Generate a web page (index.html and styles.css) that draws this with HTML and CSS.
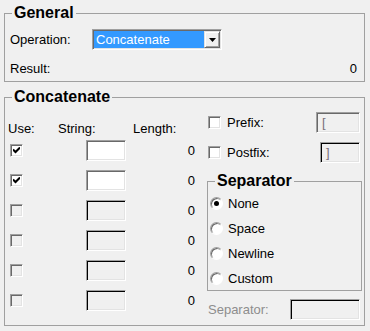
FILE: index.html
```html
<!DOCTYPE html>
<html lang="en">
<head>
  <meta charset="UTF-8">
  <title>Concatenate</title>
  <link rel="stylesheet" href="styles.css">
</head>
<body>
  <fieldset class="group">
    <legend>General</legend>
    <div class="general-grid">
      <span>Operation:</span>
      <div class="combo">
        <span class="combo-value">Concatenate</span>
        <span class="combo-btn"><svg width="7" height="4" viewBox="0 0 7 4"><path d="M0 0h7L3.5 4z" fill="#000"/></svg></span>
      </div>
      <span>Result:</span>
      <span class="num">0</span>
    </div>
  </fieldset>

  <fieldset class="group concat">
    <legend>Concatenate</legend>
    <div class="concat-body">
      <div class="strings">
        <div class="strings-head">
          <span class="col-use">Use:</span>
          <span class="col-string">String:</span>
          <span>Length:</span>
        </div>
        <div class="strings-grid">
          <span class="check on"><svg width="7" height="7" viewBox="0 0 7 7"><path d="M0 2.5l2.5 2.5L7 0.5" fill="none" stroke="#000" stroke-width="2"/></svg></span>
          <span class="edit"></span>
          <span class="num">0</span>

          <span class="check on"><svg width="7" height="7" viewBox="0 0 7 7"><path d="M0 2.5l2.5 2.5L7 0.5" fill="none" stroke="#000" stroke-width="2"/></svg></span>
          <span class="edit"></span>
          <span class="num">0</span>

          <span class="check off"></span>
          <span class="edit off"></span>
          <span class="num">0</span>

          <span class="check off"></span>
          <span class="edit off"></span>
          <span class="num">0</span>

          <span class="check off"></span>
          <span class="edit off"></span>
          <span class="num">0</span>

          <span class="check off"></span>
          <span class="edit off"></span>
          <span class="num">0</span>
        </div>
      </div>

      <div class="options">
        <div class="opt-row">
          <span class="check"></span>
          <span class="opt-label">Prefix:</span>
          <span class="edit soft prefix">[</span>
        </div>
        <div class="opt-row postfix-row">
          <span class="check"></span>
          <span class="opt-label">Postfix:</span>
          <span class="edit off postfix">]</span>
        </div>

        <fieldset class="group separator">
          <legend>Separator</legend>
          <div class="radios">
            <div class="radio-row"><span class="radio sel"></span>None</div>
            <div class="radio-row"><span class="radio"></span>Space</div>
            <div class="radio-row"><span class="radio"></span>Newline</div>
            <div class="radio-row"><span class="radio"></span>Custom</div>
          </div>
        </fieldset>

        <div class="opt-row sep-row">
          <span class="muted">Separator:</span>
          <span class="edit off sep-edit"></span>
        </div>
      </div>
    </div>
  </fieldset>
</body>
</html>
```

FILE: styles.css
```css
body {
  margin: 0;
  background: #f0f0f0;
  font-family: "Liberation Sans", Arial, sans-serif;
  font-size: 13px;
  line-height: 15px;
  color: #000;
}

.group {
  margin: 4px 5px 0 4px;
  padding: 0;
  border: 1px solid #a0a0a0;
  min-width: 0;
}

.group legend {
  margin-left: 7px;
  padding: 0 2px;
  font-size: 16px;
  line-height: 18px;
  font-weight: bold;
}

.general-grid {
  display: grid;
  grid-template-columns: 82px 1fr;
  grid-auto-rows: 21px;
  row-gap: 8px;
  align-items: center;
  padding: 7px 7px 2px 5px;
}

.num {
  justify-self: end;
  text-align: right;
}

.combo {
  display: flex;
  width: 130px;
  height: 21px;
  box-sizing: border-box;
  padding: 1px;
  border: 1px solid;
  border-color: #a0a0a0 #fff #fff #a0a0a0;
  box-shadow: inset 1px 1px 0 #696969, inset -1px -1px 0 #e3e3e3;
}

.combo-value {
  flex: 1;
  background: #3399ff;
  color: #fff;
  padding-left: 2px;
  line-height: 17px;
}

.combo-btn {
  width: 16px;
  box-sizing: border-box;
  display: flex;
  align-items: center;
  justify-content: center;
  background: #f0f0f0;
  border: 1px solid;
  border-color: #e3e3e3 #696969 #696969 #e3e3e3;
  box-shadow: inset 1px 1px 0 #fff, inset -1px -1px 0 #a0a0a0;
}

.concat {
  margin-top: 6px;
}

.concat-body {
  display: flex;
  align-items: flex-start;
  padding-bottom: 5px;
}

.strings {
  width: 202px;
  padding: 14px 0 0 3px;
  box-sizing: border-box;
}

.strings-head {
  display: flex;
  height: 16px;
  align-items: center;
  margin-bottom: 4px;
}

.col-use { width: 50px; }
.col-string { width: 75px; }

.strings-grid {
  display: grid;
  grid-template-columns: 78px 40px 69px;
  grid-auto-rows: 21px;
  row-gap: 9px;
  align-items: center;
}

.check {
  width: 13px;
  height: 13px;
  box-sizing: border-box;
  border: 1px solid;
  border-color: #a0a0a0 #fff #fff #a0a0a0;
  box-shadow: inset 1px 1px 0 #696969, inset -1px -1px 0 #e3e3e3;
  background: #fff;
  display: flex;
  align-items: center;
  justify-content: center;
}

.strings-grid .check {
  margin-left: 2px;
}

.check.off {
  background: #f0f0f0;
}

.edit {
  height: 21px;
  box-sizing: border-box;
  border: 1px solid;
  border-color: #a0a0a0 #fff #fff #a0a0a0;
  box-shadow: inset 1px 1px 0 #696969, inset -1px -1px 0 #e3e3e3;
  background: #fff;
  padding: 2px 0 0 5px;
  color: #7a6f7a;
}

.edit.soft {
  background: #f0f0f0;
}

.edit.off {
  background: #f0f0f0;
  border-color: #a0a0a0 #fff #fff #a0a0a0;
  box-shadow: inset 1px 1px 0 #000, inset -1px -1px 0 #e3e3e3;
}

.options {
  width: 155px;
  margin-left: 0;
  padding-top: 6px;
}

.opt-row {
  display: flex;
  align-items: center;
  height: 21px;
}

.opt-row .check {
  margin-left: 1px;
  margin-right: 6px;
}

.opt-row .edit {
  margin-left: auto;
  margin-right: 2px;
}

.prefix { width: 44px; }
.postfix { width: 40px; }

.postfix-row {
  margin-top: 9px;
}

.separator {
  margin: 9px 0 0 0;
}

.radios {
  display: flex;
  flex-direction: column;
  gap: 6px;
  padding: 4px 0 2px 2px;
}

.radio-row {
  display: flex;
  align-items: center;
  height: 19px;
}

.radio {
  position: relative;
  width: 13px;
  height: 13px;
  box-sizing: border-box;
  border-radius: 50%;
  border: 1px solid;
  border-color: #a0a0a0 #fff #fff #a0a0a0;
  box-shadow: inset 1px 1px 0 #696969;
  background: #fff;
  margin-right: 5px;
}

.radio.sel::after {
  content: "";
  position: absolute;
  left: 3px;
  top: 3px;
  width: 5px;
  height: 5px;
  border-radius: 50%;
  background: #000;
}

.sep-row {
  margin-top: 8px;
  padding-left: 1px;
}

.muted {
  color: #8d8d8d;
}

.sep-edit { width: 70px; }
```
